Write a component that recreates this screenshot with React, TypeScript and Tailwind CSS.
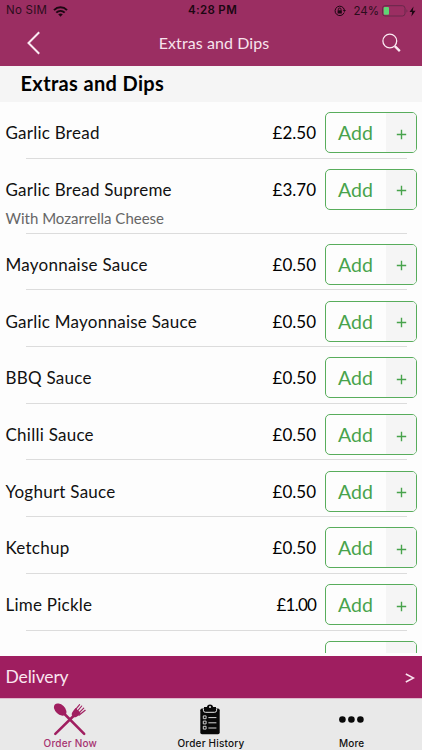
const items = [
  { name: 'Garlic Bread', price: '£2.50' },
  { name: 'Garlic Bread Supreme', price: '£3.70', note: 'With Mozarrella Cheese' },
  { name: 'Mayonnaise Sauce', price: '£0.50' },
  { name: 'Garlic Mayonnaise Sauce', price: '£0.50' },
  { name: 'BBQ Sauce', price: '£0.50' },
  { name: 'Chilli Sauce', price: '£0.50' },
  { name: 'Yoghurt Sauce', price: '£0.50' },
  { name: 'Ketchup', price: '£0.50' },
  { name: 'Lime Pickle', price: '£1.00' },
];

function StatusBar() {
  return (
    <div className="grid h-[22px] grid-cols-3 items-center px-[6px] font-['Inter',sans-serif] text-[11.5px] text-[#2b0d1c]">
      <div className="flex items-center gap-[6px]">
        <span className="tracking-[0.25px]">No SIM</span>
        <svg width="15" height="11" viewBox="0 0 15 11" fill="none" stroke="#1c0712" strokeWidth="2">
          <path d="M1 4.1C4.7.4 10.3.4 14 4.1" />
          <path d="M3.3 6.6c2.4-2.3 6-2.3 8.4 0" />
          <path d="M5.2 8.3c1.3-1.2 3.3-1.2 4.6 0L7.5 10.7z" fill="#1c0712" stroke="none" />
        </svg>
      </div>
      <span className="pl-[3px] text-center font-semibold tracking-[0.35px] text-[#1c0712]">4:28 PM</span>
      <div className="-mr-[5px] flex items-center justify-end">
        <svg width="12" height="12" viewBox="0 0 12 12" fill="none" stroke="#1c0712">
          <path d="M10.2 7.5A4.7 4.7 0 1 1 10.4 5" />
          <path d="M8.8 4.9h3.2l-1.6 2z" fill="#1c0712" stroke="none" />
          <rect x="3.6" y="5.3" width="4.2" height="3.2" fill="#1c0712" stroke="none" />
          <path d="M4.4 5.4V4.3a1.3 1.3 0 0 1 2.6 0v1.1" strokeWidth=".9" />
        </svg>
        <span className="ml-[7px] pt-px">24%</span>
        <svg className="ml-[3px]" width="27" height="12" viewBox="0 0 27 12">
          <rect x=".5" y=".7" width="22.5" height="10.3" rx="2.6" fill="none" stroke="#68284a" />
          <rect x="1.7" y="2" width="5.3" height="7.7" rx="1" fill="#5fd574" />
          <path d="M24.5 4.2c1.2.5 1.2 2.9 0 3.4z" fill="#68284a" />
        </svg>
        <svg className="mr-[5px]" width="7" height="11" viewBox="0 0 7 11" fill="#1c0712">
          <path d="M4.5.5.5 6h2.6l-.7 4.5L6.5 4.7H3.8z" />
        </svg>
      </div>
    </div>
  );
}

function AddButton({ label = 'Add' }: { label?: string }) {
  return (
    <button className="flex h-[41px] w-[92px] shrink-0 overflow-hidden rounded-[5px] border border-[#58ad5c] text-[#48a34c]">
      <span className="flex h-full w-[60px] items-center justify-center pr-px text-[19.5px]">{label}</span>
      <span className="flex h-full flex-1 items-center justify-center bg-[#f5f5f5] pt-[3px]">
        <svg width="11" height="11" viewBox="0 0 11 11" stroke="currentColor" strokeWidth="1.4">
          <path d="M5.5.8v9.4M.8 5.5h9.4" />
        </svg>
      </span>
    </button>
  );
}

function OrderIcon() {
  return (
    <svg width="34" height="33" viewBox="0 0 34 33" fill="#a01f60" stroke="#a01f60">
      <ellipse cx="7.2" cy="6.6" rx="7.3" ry="4.8" transform="rotate(43 7.2 6.6)" stroke="none" />
      <path d="M11 10.5 31.2 30.8" strokeWidth="2.5" strokeLinecap="round" />
      <path d="M20.5 13 2.3 30.8" strokeWidth="2.5" strokeLinecap="round" />
      <path d="M20 8.2c-1.7 2-1.6 3.9-.4 5.2s3.2 1.4 5.2-.4l3-3-5.2-5z" stroke="none" />
      <path d="m21.2 8.1 5.4-6.5M23 9.8l5.7-6.8M24.5 11.4l6.2-6.2M26 12.3l6.2-5" strokeWidth="1.15" strokeLinecap="round" />
    </svg>
  );
}

function ClipboardIcon() {
  return (
    <svg width="20" height="31" viewBox="0 0 20 31" fill="none">
      <path d="M2 4.5h16q1.7 0 1.7 1.7v22.3q0 1.7-1.7 1.7H2q-1.7 0-1.7-1.7V6.2Q.3 4.5 2 4.5" fill="#090909" />
      <path d="M4 3.1h2.8a3.3 3.3 0 0 1 6.4 0H16v3q0 1.6-1.6 1.6H5.6Q4 7.7 4 6.1z" fill="#090909" />
      <path d="M3.4 4.8v1.5q0 2 2 2h9.2q2 0 2-2V4.8" stroke="#e9e9e9" strokeWidth="1" />
      <circle cx="10" cy="3" r="1" fill="#e9e9e9" />
      <path d="M3.3 11.9h2.8v2.8H3.3zM3.3 17.1h2.8v2.8H3.3zM3.3 22.3h2.8v2.8H3.3z" stroke="#cfcfcf" />
      <path d="M8.4 13.6h8M8.4 18.8h8M8.4 24h8" stroke="#d7d7d7" />
    </svg>
  );
}

export default function App() {
  return (
    <div className="flex h-[750px] w-[422px] flex-col overflow-hidden bg-[#fdfdfd] font-['Lato',sans-serif] text-[#111]">
      <header className="h-[65.5px] shrink-0 bg-[#9b2e62]">
        <StatusBar />
        <div className="grid h-[41px] grid-cols-[1fr_auto_1fr] items-center pl-[27px] pr-[21px]">
          <svg width="14" height="24" viewBox="0 0 14 24" fill="none" stroke="#fbeaf2" strokeWidth="2">
            <path d="M12.2 1.2 1.5 12l10.7 10.8" />
          </svg>
          <h1 className="text-[16px] tracking-[0.08px] text-[#f7e3ed]">Extras and Dips</h1>
          <svg className="justify-self-end" width="19" height="20" viewBox="0 0 19 20" fill="none" stroke="#fbeaf2">
            <circle cx="7.8" cy="8" r="6.9" strokeWidth="1.3" />
            <path d="m12.8 13.1 5 5" strokeWidth="2.3" />
          </svg>
        </div>
      </header>

      <h2 className="h-[36.5px] shrink-0 bg-[#f5f5f5] pl-[20.5px] text-[20px] leading-[34px] font-bold tracking-[0.35px] text-black">
        Extras and Dips
      </h2>

      <main className="h-[551px] shrink-0 overflow-hidden">
        {items.map(({ name, price, note }) => (
          <div key={name} className={note ? 'flex h-[75px] flex-col' : 'flex h-[56.7px] flex-col'}>
            <div className="flex flex-1 items-start pt-[10.3px] pr-[5px] pl-[5.5px]">
              <div className="flex-1 text-[17px] leading-[41px] tracking-[0.25px]">
                {name}
                {note && <p className="-mt-[2px] text-[15px] leading-[20px] tracking-[0] text-[#666]">{note}</p>}
              </div>
              <span className={price === '£1.00' ? 'mr-[9px] text-[17px] leading-[41px] tracking-[-0.8px] text-black' : 'mr-[9px] text-[17px] leading-[41px] text-black'}>
                {price}
              </span>
              <AddButton />
            </div>
            <div className="mr-[15px] ml-[26px] h-px shrink-0 bg-[#dcdcdc]" />
          </div>
        ))}
        {/* next row, only its top edge is scrolled into view */}
        <div className="flex justify-end pt-[10px] pr-[5px]">
          <AddButton label="" />
        </div>
      </main>

      <div className="mt-[3px] flex h-[42px] shrink-0 items-center justify-between bg-[#9f1e60] pr-[7px] pl-[5.5px] text-[17.5px] text-[#fae6f0]">
        <span className="tracking-[-0.15px]">Delivery</span>
        <svg className="mt-[2px]" width="10" height="10" viewBox="0 0 10 10" fill="none" stroke="currentColor" strokeWidth="1.5">
          <path d="m.8 1 7.8 4-7.8 4" />
        </svg>
      </div>

      <nav className="grid flex-1 grid-cols-3 border-t border-[#dfb9cd] bg-[#e9e9e9] font-['Inter',sans-serif] text-[10px] font-medium tracking-[0.2px]">
        <div className="flex flex-col items-center text-[#a63370]">
          <div className="flex h-[38px] items-center pt-[3px]"><OrderIcon /></div>
          <span className="leading-[12px]">Order Now</span>
        </div>
        <div className="flex flex-col items-center">
          <div className="flex h-[38px] items-center pt-[3px] pr-px"><ClipboardIcon /></div>
          <span className="leading-[12px]">Order History</span>
        </div>
        <div className="flex flex-col items-center">
          <div className="flex h-[38px] items-center pt-[2px]">
            <svg width="25" height="7" viewBox="0 0 25 7" fill="#090909">
              <circle cx="3.4" cy="3.5" r="3.3" />
              <circle cx="12.4" cy="3.5" r="3.3" />
              <circle cx="21.4" cy="3.5" r="3.3" />
            </svg>
          </div>
          <span className="leading-[12px]">More</span>
        </div>
      </nav>
    </div>
  );
}
